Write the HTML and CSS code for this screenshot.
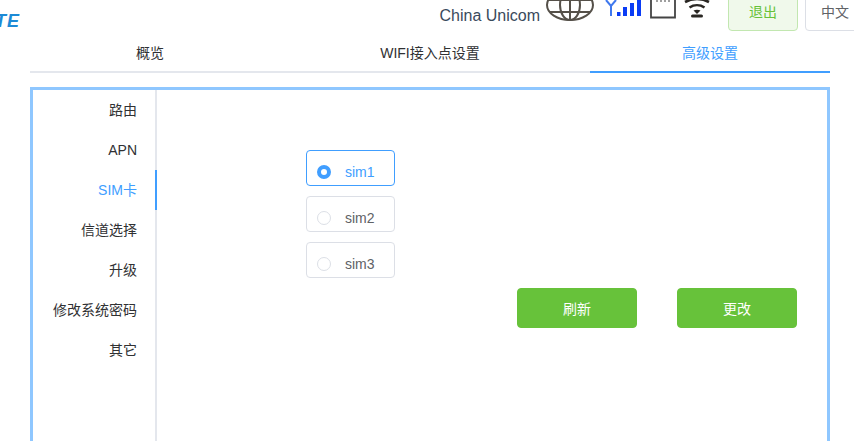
FILE: index.html
```html
<!DOCTYPE html>
<html lang="zh-CN">
<head>
  <meta charset="UTF-8">
  <title>高级设置</title>
  <link rel="stylesheet" href="styles.css">
</head>
<body>
  <div class="page">
    <div class="top">
      <div class="logo">TE</div>
      <div class="status">
        <span class="carrier">China Unicom</span>
        <svg class="ico-globe" width="50" height="22" viewBox="0 0 50 22" fill="none" stroke="#555049" stroke-width="2">
          <ellipse cx="25" cy="5" rx="23" ry="15"/>
          <ellipse cx="25" cy="5" rx="10" ry="15"/>
          <path d="M25 -10V20M3 0H47M5 12H45"/>
        </svg>
        <svg class="ico-signal" width="38" height="20" viewBox="0 0 38 20">
          <path d="M2 0L7 6L12 0M7 6V16" fill="none" stroke="#3f78ee" stroke-width="2"/>
          <path d="M13 12h3.500v4h-3.500zM19 7h4v9h-4zM26 3h4v13h-4zM33 0h4v16h-4z" fill="#0a3cf5"/>
        </svg>
        <svg class="ico-sim" width="26" height="20" viewBox="0 0 26 20" fill="none">
          <path d="M1 -4V17.500H25V-4" stroke="#444" stroke-width="1.800"/>
          <path d="M7 0v2M11 0v2M15 0v2M19 0v2" stroke="#777" stroke-width="1.400"/>
        </svg>
        <svg class="ico-wifi" width="26" height="20" viewBox="0 0 26 20" fill="none" stroke="#2a2723" stroke-width="2.600">
          <path d="M1 2C8 -2 18 -2 25 2M5.500 7.500C10 4.500 16 4.500 20.500 7.500"/>
          <path d="M9.500 10.500C11.500 9.500 14.500 9.500 16.500 10.500L13 14Z" fill="#2a2723" stroke="none"/>
          <rect x="7" y="14.500" width="12" height="3" rx="1.500" fill="#2a2723" stroke="none"/>
        </svg>
        <button class="btn-logout">退出</button>
        <button class="btn-lang">中文</button>
      </div>
    </div>

    <div class="tabs">
      <div class="tab">概览</div>
      <div class="tab">WIFI接入点设置</div>
      <div class="tab active">高级设置</div>
    </div>

    <div class="panel">
      <ul class="side">
        <li>路由</li>
        <li>APN</li>
        <li class="active">SIM卡</li>
        <li>信道选择</li>
        <li>升级</li>
        <li>修改系统密码</li>
        <li>其它</li>
      </ul>
      <div class="content">
        <div class="sims">
          <label class="sim checked"><span class="dot"></span>sim1</label>
          <label class="sim"><span class="dot"></span>sim2</label>
          <label class="sim"><span class="dot"></span>sim3</label>
        </div>
        <div class="actions">
          <button class="btn-green">刷新</button>
          <button class="btn-green">更改</button>
        </div>
      </div>
    </div>
  </div>
</body>
</html>
```

FILE: styles.css
```css
* { box-sizing: border-box; }
html, body {
  margin: 0;
  background: #fff;
}
body {
  font-family: "Liberation Sans", "Noto Sans CJK SC", sans-serif;
  font-size: 14px;
  color: #303133;
}

.page {
  height: 441px;
  overflow: hidden;
}

.top {
  height: 41px;
  display: flex;
  justify-content: space-between;
  overflow: hidden;
}

.logo {
  margin: 11px 0 0 -5px;
  font-size: 18px;
  line-height: 20px;
  font-weight: bold;
  font-style: italic;
  letter-spacing: 1px;
  color: #1c8ad6;
}

.status {
  display: flex;
  align-items: flex-start;
}

.carrier {
  margin-top: 6px;
  font-size: 16px;
  line-height: 20px;
  color: #3a4a5c;
}

.ico-globe { margin-left: 5px; }
.ico-signal { margin-left: 9px; }
.ico-sim { margin-left: 8px; }
.ico-wifi { margin-left: 8px; }

.status button {
  height: 41px;
  margin-top: -10px;
  padding: 0;
  border-radius: 4px;
  font-family: inherit;
  font-size: 14px;
}

.btn-logout {
  width: 70px;
  margin-left: 18px;
  background: #f0f9eb;
  border: 1px solid #c2e7b0;
  color: #67c23a;
}

.btn-lang {
  width: 60px;
  margin: 0 -11px 0 7px;
  background: #fff;
  border: 1px solid #dcdfe6;
  color: #606266;
}

.tabs {
  display: grid;
  grid-template-columns: 240px 1fr 240px;
  margin: 0 24px 0 30px;
  height: 32px;
  border-bottom: 2px solid #e4e7ed;
}

.tab {
  height: 32px;
  line-height: 24px;
  text-align: center;
}

.tab.active {
  color: #409eff;
  border-bottom: 2px solid #409eff;
}

.panel {
  display: flex;
  height: 500px;
  margin: 14px 24px 0 30px;
  border: 3px solid #8fc7ff;
}

.side {
  width: 124px;
  margin: 0;
  padding: 0;
  list-style: none;
  border-right: 2px solid #e4e7ed;
}

.side li {
  height: 40px;
  line-height: 40px;
  padding-right: 18px;
  text-align: right;
}

.side li.active {
  color: #409eff;
  border-right: 2px solid #409eff;
  margin-right: -2px;
}

.content {
  flex: 1;
  padding: 60px 30px 0 149px;
}

.sims {
  display: flex;
  flex-direction: column;
  gap: 10px;
}

.sim {
  display: flex;
  align-items: center;
  width: 89px;
  height: 36px;
  padding: 8px 0 0 10px;
  border: 1px solid #dcdfe6;
  border-radius: 4px;
  color: #606266;
}

.dot {
  width: 14px;
  height: 14px;
  margin-right: 14px;
  border: 1px solid #dcdfe6;
  border-radius: 50%;
}

.sim.checked {
  border-color: #409eff;
  color: #409eff;
}

.sim.checked .dot {
  border: 4px solid #409eff;
}

.actions {
  display: flex;
  justify-content: flex-end;
  gap: 40px;
  margin-top: 10px;
}

.btn-green {
  width: 120px;
  height: 40px;
  background: #67c23a;
  border: 1px solid #67c23a;
  border-radius: 4px;
  color: #fff;
  font-family: inherit;
  font-size: 14px;
}
```
